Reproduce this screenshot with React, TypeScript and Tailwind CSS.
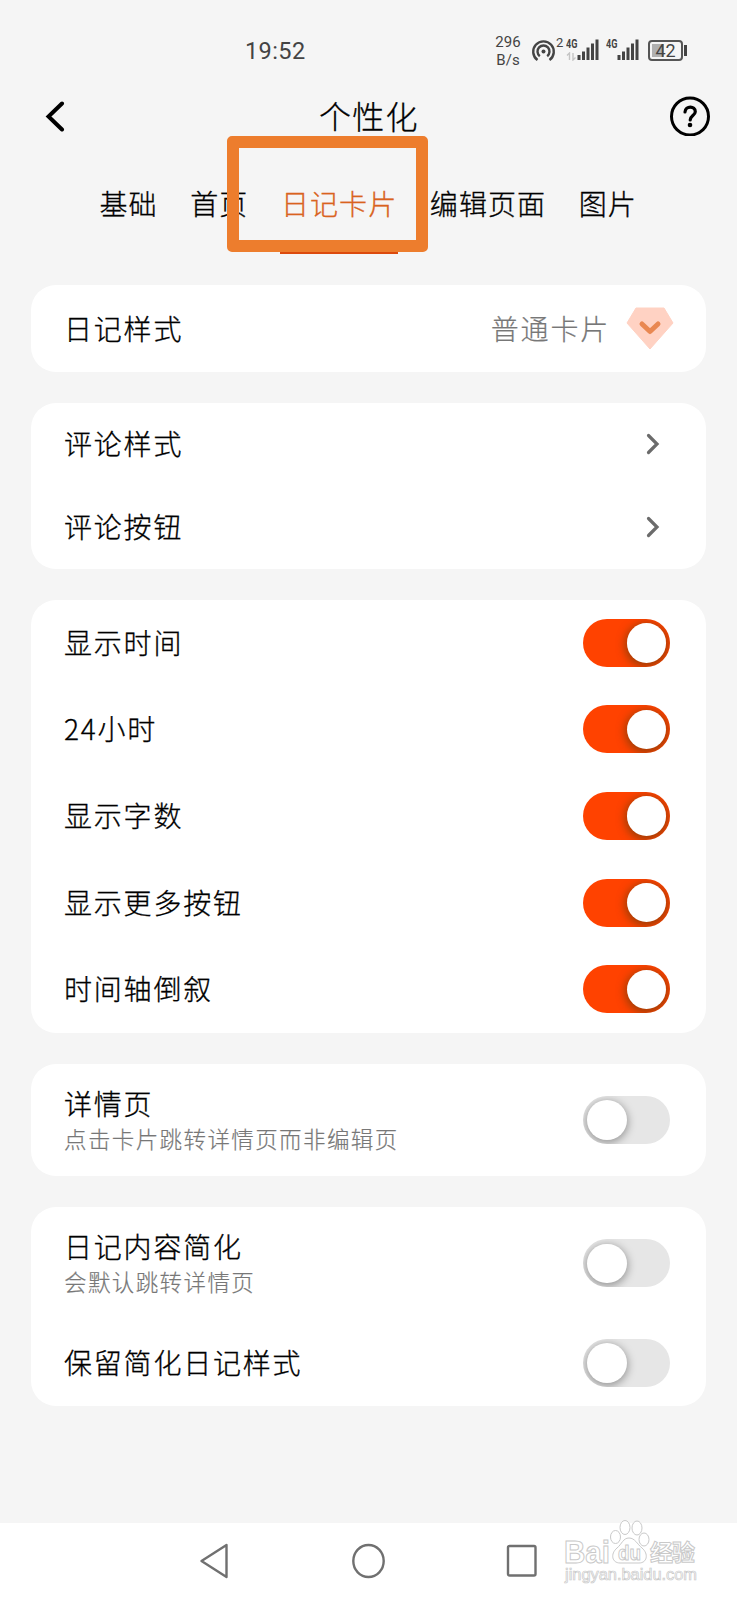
import type { ReactNode } from 'react'
import clsx from 'clsx'

const tabs = ['基础', '首页', '日记卡片', '编辑页面', '图片']

function Signal() {
  return (
    <svg width="23" height="22" viewBox="0 0 23 22" fill="#444">
      <rect x="0.5" y="16" width="3" height="5" />
      <rect x="5" y="12.5" width="3" height="8.5" />
      <rect x="9.5" y="8.5" width="3" height="12.5" />
      <rect x="14" y="4.5" width="3" height="16.5" />
      <rect x="18.5" y="0.5" width="3" height="20.5" />
    </svg>
  )
}

function StatusBar() {
  return (
    <div className="flex h-[76px] items-start text-[#444] font-['Roboto',sans-serif]">
      <div className="ml-[245px] mt-[35px] w-[249px] text-[23.5px] leading-[32px] tracking-[0.4px]">19:52</div>
      <div className="mt-[33px] w-[28px] text-center text-[15px] leading-[18px]">
        296
        <br />
        B/s
      </div>
      <svg className="ml-[9px] mt-[39px]" width="25" height="24" viewBox="0 0 25 24" fill="none" stroke="#444" strokeWidth="2.4">
        <circle cx="12.5" cy="12.5" r="2" fill="#444" stroke="none" />
        <path d="M8.8 17.2a6 6 0 1 1 7.4 0" />
        <path d="M6.5 21a10.3 10.3 0 1 1 12 0" />
      </svg>
      <span className="mt-[36px] w-[10px] text-[13px] leading-[14px]">2</span>
      <div className="mt-[38px] w-[12px]">
        <div className="w-[18px] origin-left scale-x-[0.7] text-[13px] font-bold leading-[12px]">4G</div>
        <svg className="mt-[2px]" width="11" height="9" viewBox="0 0 11 9" fill="none" stroke="#c4c4c4" strokeWidth="1.4">
          <path d="M3.5 8V1L1 3.500M7 1v7l2.500-2.500" />
        </svg>
      </div>
      <div className="mt-[39px] -ml-px">
        <Signal />
      </div>
      <div className="ml-[6px] mt-[38px] w-[12px]">
        <div className="w-[18px] origin-left scale-x-[0.7] text-[13px] font-bold leading-[12px]">4G</div>
      </div>
      <div className="mt-[39px] -ml-px">
        <Signal />
      </div>
      <div className="ml-[8px] mt-[40px] flex items-center">
        <div className="h-[21px] w-[35px] rounded-[4px] border-2 border-[#555] p-[2px]">
          <div className="flex h-full items-center justify-center bg-linear-to-r from-[#b0b0b0] from-45% to-transparent to-45% text-[18px] leading-none">
            42
          </div>
        </div>
        <div className="ml-px h-[11px] w-[3px] bg-[#444]" />
      </div>
    </div>
  )
}

function Header() {
  return (
    <div className="flex h-[80px] items-center pl-[45px] pr-[27px]">
      <svg width="40" height="32" viewBox="0 0 40 32" fill="none" stroke="#000" strokeWidth="4" strokeLinecap="round">
        <path d="M17 3.500 3.500 16.500 17 29.500" />
      </svg>
      <h1 className="mb-[3px] ml-[234px] text-[32px] font-light leading-[40px] tracking-[1.3px] [-webkit-text-stroke:0.3px]">
        个性化
      </h1>
      <svg className="ml-auto" width="40" height="40" viewBox="0 0 40 40" fill="none" stroke="#000" strokeWidth="3">
        <circle cx="20" cy="20.500" r="18.500" />
        <path d="M15 16c.4-6.500 10.500-6.300 10.300-.3-.1 3.800-5.100 4-5.100 8.300" strokeWidth="3.200" strokeLinecap="round" />
        <circle cx="20" cy="29" r="2.300" fill="#000" stroke="none" />
      </svg>
    </div>
  )
}

function Tabs() {
  return (
    <div className="flex h-[98px] gap-[32.5px] pl-[99.5px]">
      {tabs.map((tab) => (
        <div key={tab} className="relative h-full shrink-0">
          <div
            className={clsx(
              'mt-[27px] text-[28px] font-light leading-[40px] tracking-[1.1px] [-webkit-text-stroke:0.3px]',
              tab === '日记卡片' ? 'text-[#d9631e]' : 'text-black',
            )}
          >
            {tab}
          </div>
          {tab === '日记卡片' && (
            <>
              <div className="absolute left-[-1px] top-[93px] h-[5px] w-[118px] bg-[#dc4a0d]" />
              <div className="absolute left-[-53.5px] top-[-20.5px] h-[116px] w-[201px] rounded-[5px] border-[12px] border-[#ed7d2d]" />
            </>
          )}
        </div>
      ))}
    </div>
  )
}

function Card({ children }: { children: ReactNode }) {
  return <section className="rounded-[25px] bg-white pl-[33px] pr-[36px]">{children}</section>
}

function Label({ title, desc }: { title: string; desc?: string }) {
  return (
    <div className={desc ? '' : 'mb-[2px]'}>
      <div className="text-[28px] font-light leading-[38px] tracking-[1.8px] [-webkit-text-stroke:0.3px]">{title}</div>
      {desc && (
        <div className="-mt-px text-[22.5px] font-light leading-[35px] tracking-[1.4px] text-[#777] [-webkit-text-stroke:0.2px]">
          {desc}
        </div>
      )}
    </div>
  )
}

function Arrow() {
  return (
    <svg className="mr-[10px]" width="14" height="22" viewBox="0 0 14 22" fill="none" stroke="#6b6b6b" strokeWidth="3.2" strokeLinecap="round">
      <path d="m2.500 2.500 8.500 8.500-8.500 8.500" />
    </svg>
  )
}

function Toggle({ on }: { on?: boolean }) {
  return (
    <div
      className={clsx(
        'flex h-[48px] w-[87px] items-center overflow-hidden rounded-full px-[4px]',
        on ? 'justify-end bg-[#ff4200]' : 'bg-[#e6e6e6]',
      )}
    >
      <div
        className={clsx(
          'size-[39.5px] rounded-full bg-white',
          on ? 'shadow-[0_2px_9px_2px_rgba(90,60,10,0.6)]' : 'shadow-[0_2px_8px_1px_rgba(0,0,0,0.35)]',
        )}
      />
    </div>
  )
}

function Row({ title, desc, on }: { title: string; desc?: string; on?: boolean }) {
  return (
    <div className={clsx('flex items-center justify-between', desc ? 'h-[112.5px]' : 'h-[86.6px]')}>
      <Label title={title} desc={desc} />
      <Toggle on={on} />
    </div>
  )
}

function Gem() {
  return (
    <svg className="-mr-[4px] ml-[16px]" width="48" height="43" viewBox="0 0 48 43" fill="none">
      <path d="M10 1h28l9 15-23 26L1 16Z" fill="#ffd2c3" stroke="#ffd2c3" strokeLinejoin="round" />
      <path d="m16 17 8 7.500 8-7.500" stroke="#e98852" strokeWidth="5" strokeLinecap="round" strokeLinejoin="round" />
    </svg>
  )
}

function Watermark() {
  return (
    <svg className="absolute left-[560px] top-[-4px]" width="145" height="70" viewBox="0 0 145 70" fill="#fff" stroke="#c9c9c9">
      <g fontFamily="Liberation Sans, sans-serif" fontWeight="bold">
        <text x="4" y="43.5" fontSize="31" textLength="46" lengthAdjust="spacingAndGlyphs">Bai</text>
        <ellipse cx="55.5" cy="18" rx="5" ry="6.5" />
        <ellipse cx="65" cy="8.5" rx="5" ry="7" />
        <ellipse cx="77" cy="9" rx="5" ry="7" />
        <ellipse cx="84" cy="20.5" rx="5" ry="6.5" />
        <path d="M69 19c-6 0-7 6-12 10-7 6-5 15 3 15h19c8 0 10-9 3-15-5-4-7-10-13-10Z" />
        <text x="58" y="41" fontSize="21" textLength="23" lengthAdjust="spacingAndGlyphs">du</text>
        <text x="90" y="42" fontSize="23" fontFamily="Noto Sans CJK SC, sans-serif" textLength="45">经验</text>
      </g>
      <text x="5" y="61" fontSize="16" fontFamily="Liberation Sans, sans-serif" strokeWidth="0.7" textLength="132" lengthAdjust="spacingAndGlyphs">
        jingyan.baidu.com
      </text>
    </svg>
  )
}

function NavBar() {
  return (
    <div className="relative flex h-[77.5px] items-center bg-white">
      <svg className="ml-[199px]" width="30" height="36" viewBox="0 0 30 36" fill="none" stroke="#707070" strokeWidth="2.4" strokeLinejoin="round">
        <path d="M27.500 2v32L2.500 18Z" />
      </svg>
      <svg className="ml-[122px]" width="34" height="36" viewBox="0 0 34 36" fill="none" stroke="#707070" strokeWidth="2.4">
        <ellipse cx="17.500" cy="18" rx="15.200" ry="16" />
      </svg>
      <svg className="ml-[121px]" width="32" height="34" viewBox="0 0 32 34" fill="none" stroke="#707070" strokeWidth="2.4">
        <rect x="2" y="2" width="27.500" height="29.500" rx="1.5" />
      </svg>
      <Watermark />
    </div>
  )
}

export default function App() {
  return (
    <div className="flex h-[1600px] w-[737px] flex-col overflow-hidden bg-[#f5f5f5] text-black font-['Noto_Sans_CJK_SC',sans-serif]">
      <StatusBar />
      <Header />
      <Tabs />
      <main className="flex flex-1 flex-col gap-[31px] px-[31px] pt-[31px]">
        <Card>
          <div className="flex h-[87px] items-center">
            <Label title="日记样式" />
            <span className="mb-[2px] ml-auto text-[28px] font-light leading-[38px] tracking-[1.8px] text-[#777] [-webkit-text-stroke:0.2px]">
              普通卡片
            </span>
            <Gem />
          </div>
        </Card>
        <Card>
          {['评论样式', '评论按钮'].map((title) => (
            <div key={title} className="flex h-[82.8px] items-center justify-between">
              <Label title={title} />
              <Arrow />
            </div>
          ))}
        </Card>
        <Card>
          <Row title="显示时间" on />
          <Row title="24小时" on />
          <Row title="显示字数" on />
          <Row title="显示更多按钮" on />
          <Row title="时间轴倒叙" on />
        </Card>
        <Card>
          <Row title="详情页" desc="点击卡片跳转详情页而非编辑页" />
        </Card>
        <Card>
          <Row title="日记内容简化" desc="会默认跳转详情页" />
          <Row title="保留简化日记样式" />
        </Card>
      </main>
      <NavBar />
    </div>
  )
}
